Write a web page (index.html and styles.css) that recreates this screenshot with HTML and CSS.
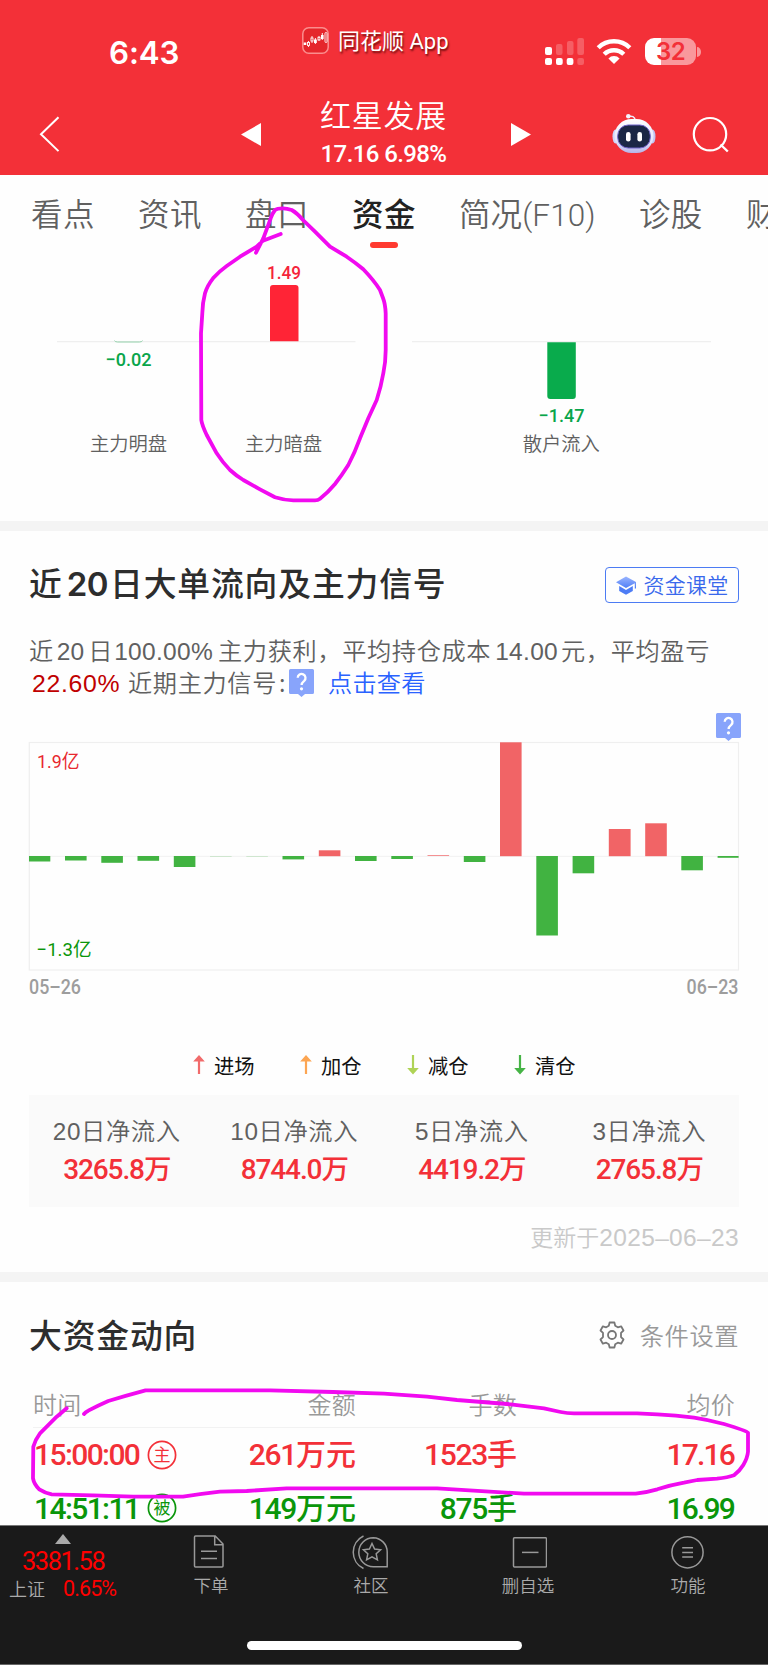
FILE: index.html
```html
<!DOCTYPE html>
<html lang="zh-CN">
<head>
<meta charset="utf-8">
<title>红星发展 - 资金</title>
<link rel="stylesheet" href="styles.css">
</head>
<body>
<div class="screen">
  <header class="top">
    <div class="status">
      <div class="clock">6:43</div>
      <div class="brand">
        <svg class="brand-icon" width="27" height="27" viewBox="0 0 27 27"><rect x=".8" y=".8" width="25.4" height="25.4" rx="6" fill="#e5262b" stroke="#fb8d8d" stroke-width="1.5"/><g fill="none" stroke="#fff" stroke-width=".9"><path d="M6.5 14v6M10 9v7M13.4 11v6M17 9v5M20.3 6v7"/><rect x="23" y="5.5" width="2" height="10" rx="1"/></g><g fill="#fff"><rect x="1.7" y="15.5" width="2.6" height="2.5"/><rect x="12" y="12.5" width="2.8" height="3.5"/><rect x="19" y="8" width="2.6" height="4"/></g><g fill="#e5262b" stroke="#fff" stroke-width=".9"><rect x="5.5" y="15.4" width="2" height="3"/><rect x="9" y="11" width="2" height="3"/><rect x="16" y="10.3" width="2" height="2.6"/></g></svg>
        <span>同花顺 App</span>
      </div>
      <div class="signals">
        <svg width="40" height="28" viewBox="0 0 40 28" fill="#fff"><rect x="0" y="9" width="7" height="8" rx="2"/><g opacity=".22"><rect x="11" y="6" width="6.5" height="11" rx="2"/><rect x="22" y="3" width="6.5" height="14" rx="2"/><rect x="32.3" y="0" width="6.7" height="17" rx="2"/><rect x="32.3" y="20" width="6.7" height="7" rx="2"/></g><rect x="0" y="20" width="7" height="7" rx="2"/><rect x="11" y="20" width="6.7" height="7" rx="2"/><rect x="21.7" y="20" width="6.7" height="7" rx="2"/></svg>
        <svg class="wifi" width="36" height="27" viewBox="0 0 36 27"><g fill="none" stroke="#fff" stroke-width="4.4"><path d="M2.2 9.8a22.5 22.5 0 0 1 31.6 0"/><path d="M8.2 16.2a14 14 0 0 1 19.6 0"/></g><path d="M18 26l-5.6-5.6a8 8 0 0 1 11.2 0z" fill="#fff"/></svg>
        <div class="battery"><span>32</span></div>
        <svg class="nub" width="5" height="10" viewBox="0 0 5 10"><path d="M0 0a5 5 0 0 1 0 10z" transform="scale(.8 1)" fill="#f9989c"/></svg>
      </div>
    </div>
    <nav class="navbar">
      <svg class="back" width="24" height="40" viewBox="0 0 24 40"><path d="M21.5 3.3L4 20.3l17.5 16.8" fill="none" stroke="#fff" stroke-width="2"/></svg>
      <svg class="prev" width="20" height="23" viewBox="0 0 20 23"><path d="M20 0v23L0 11.5z" fill="#fff"/></svg>
      <div class="stock"><div class="stock-name">红星发展</div><div class="stock-price">17.16 6.98%</div></div>
      <svg class="next" width="20" height="23" viewBox="0 0 20 23"><path d="M0 0v23l20-11.5z" fill="#fff"/></svg>
      <svg class="robot" width="44" height="42" viewBox="0 0 44 42"><defs><linearGradient id="shell" x1="0" y1="0" x2="0" y2="1"><stop offset="0" stop-color="#fff"/><stop offset=".65" stop-color="#e3e4fb"/><stop offset="1" stop-color="#b5b4e8"/></linearGradient></defs><path d="M16 3.5c4-.7 6.8-.3 7.3 4" fill="none" stroke="#eef" stroke-width="1.6"/><circle cx="16.3" cy="3.3" r="2.3" fill="#f4f4ff"/><ellipse cx="3.5" cy="23.5" rx="3" ry="7" fill="#cfd5fa"/><ellipse cx="40.5" cy="23.5" rx="3" ry="7" fill="#c1c5f3"/><rect x="2.5" y="6" width="39" height="34" rx="17" fill="url(#shell)"/><rect x="5.7" y="12" width="32.6" height="23" rx="10.5" fill="#1b2745" stroke="#6f62c8" stroke-width="1"/><rect x="14" y="19" width="4.6" height="9.5" rx="2.3" fill="#fff"/><rect x="25.4" y="19" width="4.6" height="9.5" rx="2.3" fill="#fff"/></svg>
      <svg class="search" width="38" height="38" viewBox="0 0 38 38"><circle cx="18" cy="18.2" r="16.2" fill="none" stroke="#fff" stroke-width="2.2"/><path d="M28.5 28.5l7.3 7" stroke="#fff" stroke-width="2.4"/></svg>
    </nav>
  </header>

  <div class="tabs">
    <div class="tab">看点</div><div class="tab">资讯</div><div class="tab">盘口</div><div class="tab active">资金</div><div class="tab f10">简况(F10)</div><div class="tab">诊股</div><div class="tab">财</div>
  </div>

  <section class="today">
    <svg width="768" height="268" viewBox="0 253 768 268">
      <path d="M57 341.7h298.5M412 341.7h299" stroke="#efefef" stroke-width="1.3"/>
      <path d="M114.5 340.5q.5 1.5 3 1.5h22q2.5 0 3-1.5" fill="none" stroke="#7cc99b" stroke-width=".8"/>
      <path d="M270 341.3V288q0-3 3-3h22.5q3 0 3 3v53.3z" fill="#ff2436"/>
      <path d="M547.3 342.3V396q0 3 3 3h22.5q3 0 3-3v-53.7z" fill="#09ab4c"/>
      <g class="num">
        <text x="284" y="279" textLength="34" lengthAdjust="spacingAndGlyphs" fill="#f5243a">1.49</text>
        <text x="128.5" y="366" textLength="46" lengthAdjust="spacingAndGlyphs" fill="#09a54a">−0.02</text>
        <text x="561.5" y="422" textLength="46" lengthAdjust="spacingAndGlyphs" fill="#09a54a">−1.47</text>
      </g>
      <g class="cat"><text x="128.5" y="450.5">主力明盘</text><text x="283.5" y="450.5">主力暗盘</text><text x="561.3" y="450.5">散户流入</text></g>
    </svg>
  </section>
  <div class="divider"></div>

  <section class="flow">
    <div class="head">
      <h2>近<b>20</b>日大单流向及主力信号</h2>
      <div class="course"><svg width="20" height="19" viewBox="0 0 20 19"><defs><linearGradient id="cap" x1="0" y1="0" x2="0" y2="1"><stop offset="0" stop-color="#9ab5ff"/><stop offset="1" stop-color="#4d7cf5"/></linearGradient></defs><path d="M10 .5L20 6v6.5h-1.2V7.2L10 12 0 6.3z" fill="url(#cap)"/><path d="M3.2 10L10 14l6.8-4v5L10 18.8 3.2 15z" fill="#4d7cf5"/></svg><span>资金课堂</span></div>
    </div>
    <div class="summary">
      <div class="line1">近<i>20</i>日<i class="pct">100.00%</i>主力获利，平均持仓成本<i class="cost">14.00</i>元，平均盈亏</div>
      <div class="line2"><span class="profit">22.60%</span><span class="sig">近期主力信号<i>:</i></span><svg class="help" width="25" height="28" viewBox="0 0 25 28"><path d="M1.5 0h22q1.5 0 1.5 1.5v22q0 1.5-1.5 1.5H16l-3.5 3L9 25H1.5Q0 25 0 23.5v-22Q0 0 1.5 0z" fill="#88a4fb"/><path d="M8.7 8.8a3.9 3.9 0 1 1 6.5 3c-1.7 1.4-2.6 2-2.6 4.2" fill="none" stroke="#fff" stroke-width="2.3"/><circle cx="12.5" cy="19.8" r="1.6" fill="#fff"/></svg><span class="link">点击查看</span></div>
    </div>
    <div class="chart">
      <svg width="768" height="308" viewBox="0 702 768 308">
        <rect x="29.3" y="742.5" width="709.2" height="227.5" fill="none" stroke="#efefef" stroke-width="1.2"/>
        <path d="M29 856.4h710" stroke="#eee" stroke-width=".8"/>
        <g fill="#41b341">
          <rect x="29" y="856" width="21.3" height="5.5"/><rect x="65" y="856" width="21.6" height="4.5"/><rect x="101.3" y="856" width="21.6" height="6.8"/><rect x="137.5" y="856" width="21.6" height="4.8"/><rect x="173.8" y="856" width="21.6" height="11"/><rect x="210" y="856" width="21.6" height=".2"/><rect x="246.3" y="856" width="21.6" height=".2"/><rect x="282.5" y="856" width="21.6" height="3.4"/><rect x="355" y="856" width="21.6" height="5"/><rect x="391.3" y="856" width="21.6" height="3"/><rect x="463.8" y="856" width="21.6" height="6"/><rect x="536.3" y="856" width="21.6" height="79.5"/><rect x="572.6" y="856" width="21.6" height="17.3"/><rect x="681.3" y="856" width="21.6" height="14.3"/><rect x="717.6" y="856" width="21" height="1.8"/>
        </g>
        <g fill="#f16466">
          <rect x="318.8" y="850.3" width="21.6" height="5.9"/><rect x="427.5" y="855.3" width="21.6" height=".7"/><rect x="500" y="742.3" width="21.6" height="113.9"/><rect x="608.8" y="829" width="21.8" height="27.2"/><rect x="645.2" y="823.3" width="21.6" height="32.9"/>
        </g>
        <g transform="translate(716 713)"><path d="M1.5 0h22q1.5 0 1.5 1.5v22q0 1.5-1.5 1.5H16l-3.5 3L9 25H1.5Q0 25 0 23.5v-22Q0 0 1.5 0z" fill="#88a4fb"/><path d="M8.7 8.8a3.9 3.9 0 1 1 6.5 3c-1.7 1.4-2.6 2-2.6 4.2" fill="none" stroke="#fff" stroke-width="2.3"/><circle cx="12.5" cy="19.8" r="1.6" fill="#fff"/></g>
        <g class="axis">
          <text x="37" y="768" textLength="42.5" lengthAdjust="spacingAndGlyphs" fill="#e8282f">1.9亿</text>
          <text x="36.5" y="955.5" textLength="55" lengthAdjust="spacingAndGlyphs" fill="#0a960a">−1.3亿</text>
          <text class="date" x="29" y="993.5" textLength="52" lengthAdjust="spacingAndGlyphs">05–26</text>
          <text class="date" x="686.5" y="993.5" textLength="52" lengthAdjust="spacingAndGlyphs">06–23</text>
        </g>
      </svg>
    </div>
    <div class="legend">
      <div><svg width="12" height="20" viewBox="0 0 12 20" fill="#f16b6b"><path d="M6 0l5.8 6.5H7.1V19H4.9V6.5H.2z"/></svg>进场</div>
      <div><svg width="12" height="20" viewBox="0 0 12 20" fill="#fca552"><path d="M6 0l5.8 6.5H7.1V19H4.9V6.5H.2z"/></svg>加仓</div>
      <div><svg width="12" height="20" viewBox="0 0 12 20" fill="#afd356"><path d="M6 19.5l5.8-6.5H7.1V0H4.9v13H.2z"/></svg>减仓</div>
      <div><svg width="12" height="20" viewBox="0 0 12 20" fill="#46b446"><path d="M6 19.5l5.8-6.5H7.1V0H4.9v13H.2z"/></svg>清仓</div>
    </div>
    <div class="stats">
      <div><p>20日净流入</p><strong>3265.8<em>万</em></strong></div>
      <div><p>10日净流入</p><strong>8744.0<em>万</em></strong></div>
      <div><p>5日净流入</p><strong>4419.2<em>万</em></strong></div>
      <div><p>3日净流入</p><strong>2765.8<em>万</em></strong></div>
    </div>
    <div class="updated">更新于<span>2025–06–23</span></div>
  </section>
  <div class="divider second"></div>

  <section class="big">
    <div class="head2">
      <h2>大资金动向</h2>
      <div class="settings"><svg width="28" height="28" viewBox="0 0 28 28" fill="none" stroke="#777" stroke-width="1.8"><path d="M11.6 1.5h4.8l.8 3.3 2.6 1.5 3.3-1 2.4 4.2-2.5 2.4v4.2l2.5 2.4-2.4 4.2-3.3-1-2.6 1.5-.8 3.3h-4.8l-.8-3.3-2.6-1.5-3.3 1-2.4-4.2L5 16.1v-4.2L2.5 9.5l2.4-4.2 3.3 1 2.6-1.5z" stroke-linejoin="round"/><circle cx="14" cy="14" r="4"/></svg><span>条件设置</span></div>
    </div>
    <div class="row th"><span>时间</span><span>金额</span><span>手数</span><span>均价</span></div>
    <div class="row red"><span class="time">15:00:00<svg width="30" height="30" viewBox="0 0 30 30"><circle cx="15" cy="15" r="13.6" fill="none" stroke="currentColor" stroke-width="1.7"/><text x="15" y="21.2">主</text></svg></span><span>261<em>万元</em></span><span>1523<em>手</em></span><span class="avg">17.16</span></div>
    <div class="row green"><span class="time">14:51:11<svg width="30" height="30" viewBox="0 0 30 30"><circle cx="15" cy="15" r="13.6" fill="none" stroke="currentColor" stroke-width="1.7"/><text x="15" y="21.2">被</text></svg></span><span>149<em>万元</em></span><span>875<em>手</em></span><span class="avg">16.99</span></div>
  </section>

  <footer class="bottom">
    <div class="index">
      <svg width="16" height="10" viewBox="0 0 16 10"><path d="M8 0l8 10H0z" fill="#aaa"/></svg>
      <div class="value">3381.58</div>
      <div class="change"><span>上证</span><b>0.65%</b></div>
    </div>
    <div class="item order"><svg width="36" height="36" viewBox="0 0 36 36"><path d="M2.5 2h19.7L30 10v22q0 1-1 1H2.5q-1 0-1-1V3q0-1 1-1z M21.7 2v8.8H30 M8 17.3h16M8 24.6h16"/></svg><span>下单</span></div>
    <div class="item social"><svg width="38" height="36" viewBox="0 0 38 36"><path d="M11.5 2a18 18 0 0 0 0 32.5"/><path d="M21.3 3.7a14.5 14.5 0 1 0 0 29h13.9V18.3A14.3 14.3 0 0 0 21.3 3.7z"/><path d="M20 9.5l2.6 5.5 6 .7-4.4 4.1 1.2 6-5.4-3-5.4 3 1.2-6-4.4-4.1 6-.7z"/></svg><span>社区</span></div>
    <div class="item remove"><svg width="38" height="36" viewBox="0 0 38 36"><rect x="4.5" y="3.8" width="33" height="29.2" rx="1"/><path d="M13 18.4h16.5"/></svg><span>删自选</span></div>
    <div class="item more"><svg width="36" height="36" viewBox="0 0 36 36"><circle cx="17.5" cy="18.3" r="15.6"/><path d="M12.2 13.8h10.8M12.2 18.4h10.8M12.2 23h10.8"/></svg><span>功能</span></div>
    <div class="home"></div>
  </footer>

  <svg class="ink" width="768" height="1665" viewBox="0 0 768 1665">
    <path d="M280.7 234L263 240.7 256.7 246.7 240 256.7 226.7 266Q219 271.5 213 278.3 207 286 205 293.3 202.5 303 202.3 313.3L201 333.3 201.3 420Q202 425 206.7 435L216.7 453.3Q223 463 230 470 236 475.5 243.3 480L260 489.3 275 497.3Q283 500 293.3 500.3H315Q318 500.3 320 498.7 328 492.5 335 484 342 475 348.3 465 355 452 360 438.3L368.3 418.3 376.7 400Q381 387 383.3 373.3 385.7 362 385.7 350V313.3Q385.3 304 383 298L380 290Q374 280.5 363.3 269.3 356 263 346.7 256.7L330 246.7 315 231.7 303 220Q297 213 291.7 210 287 208.3 283 208.3 277 208.3 275 210 272 214 270.7 218.3L263.3 238.3 256 252.7"/>
    <path d="M66.7 1408.3L56.7 1416.7 40 1433.3Q35 1440 33.3 1446.7L33 1478.3Q34 1484 39.3 1489.3 45 1493 51.7 1494.3L93 1495.3 133 1496.7H183Q200 1494 220 1491.7L246.7 1491 286.7 1488.3H437L524 1493.7H635.7Q646 1492.5 657.3 1489.3 671 1485 684 1482.7L697.3 1480 717 1478.7Q728 1477.5 734 1475.3 740 1470.5 743.3 1465 747.5 1458 748 1451.7V1432.7Q747 1431 724 1424 709 1420 694 1417.7 676 1415 657.3 1414.3L637 1413.3H574Q567 1413.3 560.7 1412L544 1408.3 510.7 1404.3 457 1400 427 1396.7Q405 1395 384 1393.7L333 1392 270 1390.3H145.5Q126 1395.5 108.3 1401 98 1405.5 88.3 1410.7 85.5 1412 84 1414"/>
  </svg>
</div>
</body>
</html>
```
FILE: styles.css
```css
* { box-sizing: border-box; margin: 0; padding: 0; }
body { margin: 0; background: #fff; font-family: Roboto, "Noto Sans CJK SC", sans-serif; color: #333; }
svg { display: block; flex: none; }
em, i { font-style: normal; }
.screen { position: relative; width: 768px; height: 1665px; overflow: hidden; display: flex; flex-direction: column; background: #fefefe; white-space: nowrap; }

.top { height: 174.5px; background: #f33038; color: #fff; flex: none; }
.status { height: 86px; display: flex; align-items: flex-start; }
.clock { width: 193px; margin-left: 109px; padding-top: 35px; font: 600 31.3px/36px Inter, sans-serif; letter-spacing: -.1px; }
.brand { width: 243px; display: flex; gap: 9px; padding-top: 27px; }
.brand span { font: 400 22px/29px Roboto, "Noto Sans CJK SC", sans-serif; text-shadow: 1px 2px 2px rgba(70,0,0,.75); }
.signals { display: flex; padding-top: 38px; }
.wifi { margin: 0 0 0 11px; }
.battery { margin-left: 13px; width: 51px; height: 27px; border-radius: 9px; background: linear-gradient(90deg, #fff 16px, #f9989c 16px); display: flex; justify-content: center; align-items: center; }
.battery span { font: 600 24px/27px Inter, sans-serif; color: #f33038; letter-spacing: -.5px; }
.nub { margin: 9px 0 0 1px; }
.navbar { height: 88px; display: flex; align-items: flex-start; }
.back { margin: 28px 0 0 37px; }
.prev { margin: 36.5px 0 0 180px; }
.stock { width: 245px; text-align: center; }
.stock-name { font: 350 31px/36px "Noto Sans CJK SC", sans-serif; letter-spacing: .7px; padding-top: 10px; }
.stock-price { font: 500 24px/28px Roboto, sans-serif; letter-spacing: -.6px; padding-top: 8px; height: 36px; }
.next { margin: 36.5px 0 0 5px; }
.robot { margin: 27px 0 0 81px; }
.search { margin: 30px 0 0 36px; }

.tabs { height: 78.5px; flex: none; display: flex; gap: 43.2px; padding-left: 31px; overflow: hidden; }
.tab { flex: none; font: 350 31.5px/42px Roboto, "Noto Sans CJK SC", sans-serif; letter-spacing: .4px; color: #606060; padding-top: 20px; }
.tab.active { font-weight: 500; color: #222; }
.tab.active::after { content: ""; display: block; width: 28px; height: 6px; border-radius: 3px; background: #ff3a30; margin: 5.5px auto 0; }
.tab.f10 { letter-spacing: .1px; }

.today { height: 268px; flex: none; }
.num { font: 500 18.5px Roboto, sans-serif; text-anchor: middle; }
.cat { font: 350 19.3px "Noto Sans CJK SC", sans-serif; text-anchor: middle; fill: #606060; }
.divider { height: 10px; background: #f4f4f4; flex: none; }

.flow { height: 741px; flex: none; }
.head { height: 97px; padding: 35px 29px 0 29px; display: flex; justify-content: space-between; align-items: flex-start; }
h2 { font: 500 32.8px/36px Inter, "Noto Sans CJK SC", sans-serif; letter-spacing: .85px; color: #2d2d2d; }
h2 b { font: 600 33px/36px Inter, sans-serif; letter-spacing: -.5px; margin: 0 2px 0 4px; }
.course { margin-top: 1px; width: 134px; height: 36px; border: 1px solid #4c7bf3; border-radius: 4px; display: flex; align-items: center; justify-content: center; gap: 8px; color: #3968ec; font: 350 21px/32px "Noto Sans CJK SC", sans-serif; letter-spacing: .2px; }
.course span { padding-bottom: 3px; }
.summary { height: 74px; padding-top: 6px; color: #606060; font: 350 24.2px/32px "Noto Sans CJK SC", sans-serif; letter-spacing: .65px; }
.line1 { height: 32px; padding-left: 29px; }
.line1 i { font-family: "Liberation Sans", sans-serif; font-size: 24.5px; margin: 0 4px 0 3px; letter-spacing: .1px; }
.line1 .pct { margin: 0 5px 0 1px; letter-spacing: .3px; }
.line1 .cost { margin: 0 3px 0 4px; letter-spacing: .3px; }
.line2 { height: 32px; display: flex; padding-left: 32px; }
.profit { color: #c00000; width: 96px; font: 400 24.8px/36px "Liberation Sans", sans-serif; letter-spacing: .7px; }
.sig { width: 161px; }
.sig i { margin-left: 2px; }
.help { margin-top: 3px; }
.link { margin-left: 14px; color: #2a62ff; letter-spacing: .2px; }
.chart { height: 308px; }
.axis { font: 400 19px Roboto, "Noto Sans CJK SC", sans-serif; }
.axis .date { font-weight: 500; font-size: 19.5px; fill: #9d9d9d; }
.legend { height: 84px; padding: 40px 0 0 193px; display: flex; }
.legend div { width: 107px; height: 30px; display: flex; align-items: center; gap: 9px; color: #111; font: 400 20.3px/30px "Noto Sans CJK SC", sans-serif; }
.stats { margin: 1px 29px 0; height: 112px; background: #fafafa; display: grid; grid-template-columns: repeat(4, 1fr); text-align: center; padding-top: 20px; }
.stats > div { padding-right: 2px; }
.stats p { font: 350 24.3px/34px "Liberation Sans", "Noto Sans CJK SC", sans-serif; letter-spacing: .6px; color: #606060; }
.stats strong { display: block; font: 500 28px/40px Roboto, "Noto Sans CJK SC", sans-serif; letter-spacing: -1.1px; color: #f33038; padding-top: 1px; }
.stats em { font-size: 27.5px; }
.updated { text-align: right; padding: 14px 29px 0 0; color: #c9c9c9; font: 350 23px/34px "Liberation Sans", "Noto Sans CJK SC", sans-serif; }
.updated span { font-size: 24.5px; letter-spacing: .35px; }

.big { height: 243px; flex: none; overflow: hidden; }
.head2 { height: 99px; padding: 35.5px 29px 0 29px; display: flex; justify-content: space-between; align-items: flex-start; }
.settings { margin-top: -1px; display: flex; gap: 14px; align-items: center; height: 36px; color: #999; font: 350 24.3px/36px "Noto Sans CJK SC", sans-serif; letter-spacing: .5px; }
.row { margin: 0 33px; height: 53.5px; display: grid; grid-template-columns: 162px 161px 161px 218px; align-items: center; text-align: right; font: 500 30px/53px Roboto, "Noto Sans CJK SC", sans-serif; letter-spacing: -1.3px; }
.row span:first-child { text-align: left; }
.row em { font-size: 30px; letter-spacing: 0; }
.row .avg { letter-spacing: -1.8px; padding-right: 1px; }
.row.th { height: 47px; color: #999; font: 350 24px/46px "Noto Sans CJK SC", sans-serif; letter-spacing: .2px; border-bottom: 1px solid #f2f2f2; }
.row .time { display: flex; align-items: center; gap: 8px; letter-spacing: -1.6px; padding-left: 1px; }
.time text { font: 400 17px "Noto Sans CJK SC", sans-serif; letter-spacing: 0; text-anchor: middle; fill: currentColor; }
.red { color: #f33038; }
.green { color: #0a960a; }

.bottom { position: relative; height: 140px; flex: none; background: #1a1a1a; border-top: 1px solid #777; border-bottom: 1px solid #666; display: flex; color: #aaa; }
.index { width: 130px; color: #f00; }
.index svg { margin: 8px 0 0 55px; }
.value { font: 400 25.5px/34px Roboto, sans-serif; letter-spacing: -1.5px; margin-left: 22px; }
.change { display: flex; font: 350 18px/20px "Noto Sans CJK SC", sans-serif; padding-left: 9px; }
.change span { width: 54px; color: #aaa; }
.change b { font: 400 21.5px/22px Roboto, sans-serif; letter-spacing: -.9px; }
.item { width: 160px; display: flex; flex-direction: column; align-items: center; padding-top: 8px; }
.item svg { fill: none; stroke: #999; stroke-width: 1.5; }
.item span { font: 350 17.5px/26px "Noto Sans CJK SC", sans-serif; margin-top: 2px; }
.order { margin-left: 1px; }
.remove { margin-left: -3px; }
.home { position: absolute; left: 247px; top: 115px; width: 275px; height: 9px; border-radius: 5px; background: #fff; }

.ink { position: absolute; left: 0; top: 0; fill: none; stroke: #f10af0; stroke-width: 3.8; stroke-linecap: round; stroke-linejoin: round; pointer-events: none; }
```
